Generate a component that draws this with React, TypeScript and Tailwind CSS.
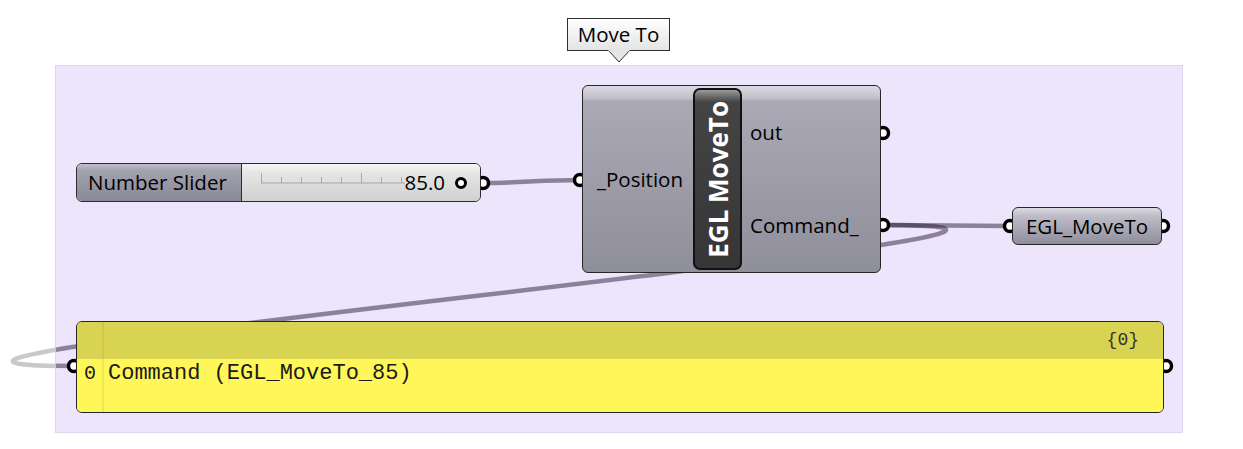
const WIRE = "rgba(41,32,54,0.5)";

const Ports = () => {
  const ports = [
    [483, 183],
    [580, 180],
    [883, 133],
    [883, 225],
    [1010, 226],
    [1163, 226],
    [74, 366],
    [1166, 366],
  ];
  return (
    <>
      {ports.map(([x, y], i) => (
        <circle key={i} cx={x} cy={y} r={5.5} fill="#fff" stroke="#000" strokeWidth={3.5} />
      ))}
    </>
  );
};

const Wires = () => {
  const loop = "M884,225 C1274,225 -315,366 75,366";
  return (
    <svg className="absolute inset-0" width={1243} height={449}>
      <defs>
        <clipPath id="grp">
          <rect x={56} y={66} width={1126} height={366} />
        </clipPath>
      </defs>
      <path d={loop} fill="none" stroke="#c9c9c9" strokeWidth={4.5} />
      <g clipPath="url(#grp)">
        <rect x={56} y={66} width={1126} height={366} fill="#ede5fc" />
        <path d={loop} fill="none" stroke={WIRE} strokeWidth={4.5} />
        <path d="M884,225 C930,225 965,226 1011,226" fill="none" stroke={WIRE} strokeWidth={4.5} />
        <path d="M482,183 C520,183 540,180 581,180" fill="none" stroke={WIRE} strokeWidth={4.5} />
      </g>
      <Ports />
    </svg>
  );
};

const Tooltip = () => (
  <div className="absolute left-[567px] top-[18px] flex flex-col items-center">
    <div className="w-[103px] h-[33px] flex items-center justify-center border border-[#2e2e2e] bg-[linear-gradient(to_bottom,#ffffff,#e4e4e4)] text-[20.5px] text-black">
      Move To
    </div>
    <svg width={24} height={14} className="-mt-px">
      <polygon points="1,0 23,0 12,12" fill="#e6e6e6" stroke="#2e2e2e" strokeWidth={1} />
      <rect x={1.5} y={0} width={21} height={1.2} fill="#e4e4e4" />
    </svg>
  </div>
);

const Slider = () => (
  <div className="absolute left-[76px] top-[163px] w-[405px] h-[39px] flex rounded-[6px] border-[1.5px] border-[#2c2c2c] overflow-hidden">
    <div className="w-[165px] shrink-0 flex items-center pl-[11px] border-r-[1.5px] border-[#2c2c2c] bg-[linear-gradient(to_bottom,#c2c1cb,#a3a2af_6px,#8a8997)] text-[20.5px] text-black">
      Number Slider
    </div>
    <div className="relative flex-1 flex items-center justify-end pr-[12px] bg-[linear-gradient(to_bottom,#f6f6f6,#e6e6e6_8px,#d0d0d0)]">
      <svg className="absolute left-[18px] top-[8px]" width={150} height={14}>
        <line x1={1} y1={11} x2={145} y2={11} stroke="#a8a8a8" strokeWidth={1} />
        {[1, 21, 41, 61, 81, 101, 121, 141].map((x, i) => (
          <line
            key={i}
            x1={x + 0.5}
            y1={i === 0 || i === 5 ? 1 : 5}
            x2={x + 0.5}
            y2={11}
            stroke="#a8a8a8"
            strokeWidth={1}
          />
        ))}
      </svg>
      <span className="relative text-[20.5px] text-black mr-[9px]">85.0</span>
      <svg width={14} height={14}>
        <circle cx={7} cy={7} r={4.5} fill="#fff" stroke="#000" strokeWidth={3} />
      </svg>
    </div>
  </div>
);

const MainNode = () => (
  <div className="absolute left-[582px] top-[85px] w-[299px] h-[188px] flex rounded-[6px] border-[1.5px] border-[#262626] bg-[linear-gradient(to_bottom,#dcdbe3,#bfbec8_13px,#aaa9b5_15px,#8f8e9b)]">
    <div className="w-[110px] shrink-0 flex items-center pl-[14px] text-[20.5px] text-black">_Position</div>
    <div className="w-[49px] shrink-0 my-[2px] flex items-center justify-center rounded-[7px] border-2 border-[#111] bg-[linear-gradient(to_bottom,#9a9a9a,#444444_12px,#363636)]">
      <span className="[writing-mode:vertical-rl] rotate-180 text-white font-bold text-[26px] leading-none whitespace-nowrap">
        EGL MoveTo
      </span>
    </div>
    <div className="flex-1 flex flex-col pl-[8px] text-[20.5px] text-black">
      <div className="h-[94px] flex items-center">out</div>
      <div className="h-[94px] flex items-center">Command_</div>
    </div>
  </div>
);

const Param = () => (
  <div className="absolute left-[1012px] top-[207px] w-[150px] h-[38px] flex items-center justify-center rounded-[6px] border-[1.5px] border-[#262626] bg-[linear-gradient(to_bottom,#dcdbe3,#bdbcc7_8px,#8f8e9b)] text-[20.5px] text-black">
    EGL_MoveTo
  </div>
);

const Panel = () => (
  <div className="absolute left-[76px] top-[321px] w-[1088px] h-[92px] flex flex-col rounded-[6px] border-[1.5px] border-[#262626] overflow-hidden font-['Liberation_Mono',monospace] text-[#1a1a1a]">
    <div className="h-[37px] shrink-0 flex bg-[#d9d352]">
      <div className="w-[27px] border-r-2 border-[#cfc84a]" />
      <div className="flex-1 flex justify-end items-center pr-[24px] text-[18px] text-[#333]">{"{0}"}</div>
    </div>
    <div className="flex-1 flex bg-[#fff759]">
      <div className="w-[27px] border-r-2 border-[#efe750] pt-[1px] pl-[7px] text-[20px] leading-[28px]">0</div>
      <div className="pt-[1px] pl-[4px] text-[22px] leading-[28px] whitespace-pre">Command (EGL_MoveTo_85)</div>
    </div>
  </div>
);

const App = () => {
  return (
    <div className="relative w-[1243px] h-[449px] bg-white overflow-hidden font-['Open_Sans',sans-serif]">
      <div className="absolute left-[55px] top-[65px] w-[1128px] h-[368px] border-[1.5px] border-[#dcd5ec] bg-[#ede5fc]" />
      <Wires />
      <Tooltip />
      <Slider />
      <MainNode />
      <Param />
      <Panel />
    </div>
  );
};

export default App;
